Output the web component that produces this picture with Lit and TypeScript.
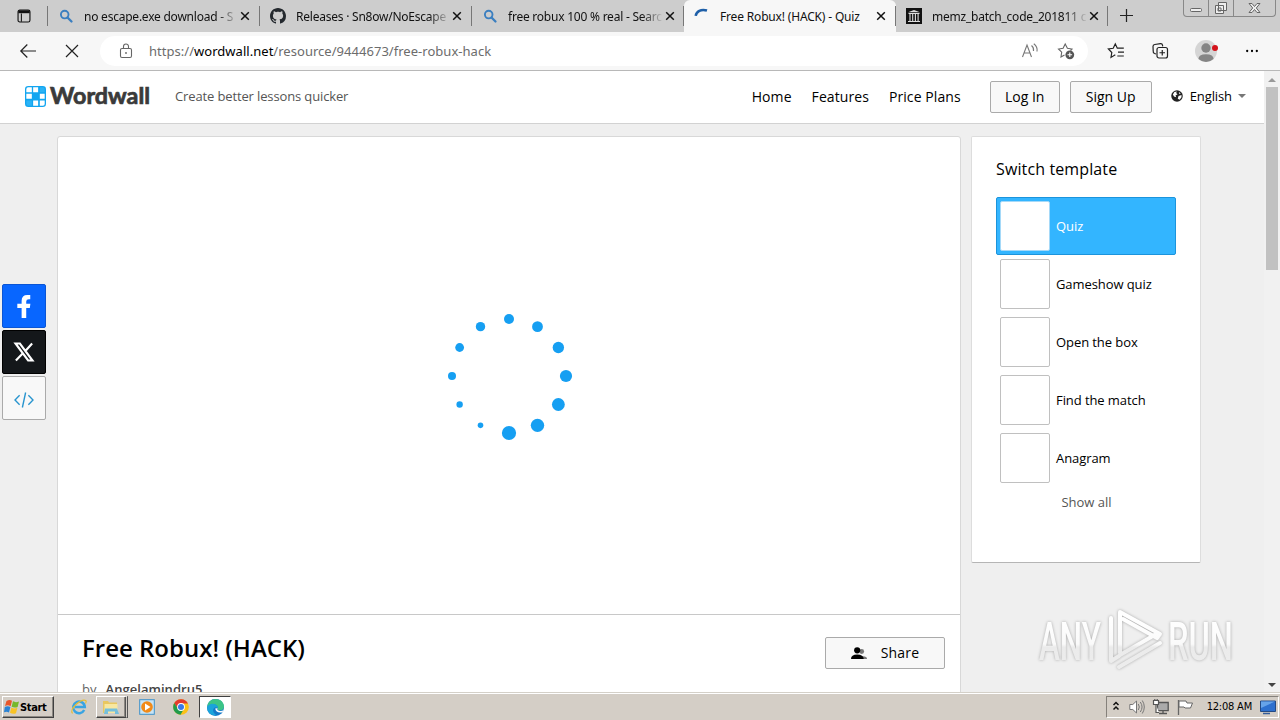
import { LitElement, html, svg, css } from "lit";
import { customElement, property } from "lit/decorators.js";
import { classMap } from "lit/directives/class-map.js";

const TABS = [
  { icon: "search", title: "no escape.exe download - S" },
  { icon: "github", title: "Releases · Sn8ow/NoEscape" },
  { icon: "search", title: "free robux 100 % real - Searc" },
  { icon: "loading", title: "Free Robux! (HACK) - Quiz", active: true },
  { icon: "archive", title: "memz_batch_code_201811 c" },
];

const TEMPLATES = ["Quiz", "Gameshow quiz", "Open the box", "Find the match", "Anagram"];

// radius of each loader dot, clockwise from the top
const DOTS = [5, 5.4, 5.7, 6.1, 6.4, 6.7, 7.1, 2.8, 3.2, 4, 4.4, 4.7];

const ICONS: Record<string, unknown> = {
  tabs: svg`<rect x="1.200" y="1.200" width="13.600" height="13.600" rx="2" fill="none" stroke="#111" stroke-width="1.300"/><path d="M1.500 1.500h13v3.300h-13z" fill="#111"/><path d="M5 5v9.500" stroke="#111" stroke-width="1.200"/>`,
  search: svg`<circle cx="6.700" cy="6.600" r="3.800" fill="none" stroke="#3b7fc0" stroke-width="1.900"/><path d="m9.500 9.500 4 4" stroke="#3b7fc0" stroke-width="2.300" stroke-linecap="round"/>`,
  github: svg`<path fill="#24292e" d="M8 0C3.58 0 0 3.58 0 8c0 3.54 2.29 6.53 5.47 7.59.4.07.55-.17.55-.38 0-.19-.01-.82-.01-1.49-2.01.37-2.53-.49-2.69-.94-.09-.23-.48-.94-.82-1.13-.28-.15-.68-.52-.01-.53.63-.01 1.08.58 1.23.82.72 1.21 1.87.87 2.33.66.07-.52.28-.87.51-1.07-1.78-.2-3.64-.89-3.64-3.95 0-.87.31-1.59.82-2.15-.08-.2-.36-1.02.08-2.12 0 0 .67-.21 2.2.82.64-.18 1.32-.27 2-.27s1.36.09 2 .27c1.53-1.04 2.2-.82 2.2-.82.44 1.1.16 1.92.08 2.12.51.56.82 1.27.82 2.15 0 3.07-1.87 3.75-3.65 3.95.29.25.54.73.54 1.48 0 1.07-.01 1.93-.01 2.2 0 .21.15.46.55.38A8.01 8.01 0 0 0 16 8c0-4.42-3.58-8-8-8z"/>`,
  loading: svg`<path d="M1.700 7.800C2.300 3.500 7 .6 13 2.500" fill="none" stroke="#1e5fa8" stroke-width="2.500"/>`,
  archive: svg`<path d="M0 0h16v16H0z" fill="#111"/><path d="M2 4.300 8 2l6 2.300z" fill="#ddd"/><path d="M2.500 5.500h11M2 13.500h12M4 6v7M6.700 6v7M9.400 6v7M12.100 6v7" stroke="#ddd" stroke-width="1.100"/>`,
  close: svg`<path d="m4.200 4.200 7.600 7.600M11.800 4.200l-7.600 7.600" stroke="#111" stroke-width="1.500"/>`,
  plus: svg`<path d="M8 0v16M0 8h16" stroke="#222" stroke-width="1.500"/>`,
  back: svg`<path d="M16 8H.8M7.300 1.500.8 8l6.500 6.500" fill="none" stroke="#222" stroke-width="1.200"/>`,
  stop: svg`<path d="m2 2 12 12M14 2 2 14" stroke="#222" stroke-width="1.200"/>`,
  lock: svg`<rect x="2.500" y="5.500" width="11" height="9" rx="1.500" fill="none" stroke="#666" stroke-width="1.100"/><path d="M5.500 5.500V3.500a2.500 2.500 0 0 1 5 0v2" fill="none" stroke="#666" stroke-width="1.100"/><circle cx="8" cy="10" r=".9" fill="#666"/>`,
  read: svg`<path d="m.5 14 4.500-12 4.500 12M2.100 10h5.800M9.500 2.500q2.500 2 2 5.500M11.800.8q4 3 3.200 7.700" fill="none" stroke="#777" stroke-width="1.100"/>`,
  addStar: svg`<path d="M6.500 12 3 14l.7-4.800L.5 6l4.600-.8L7.200 1l2.200 4.200 4.600.8-1.500 1.500" fill="none" stroke="#666" stroke-width="1.100"/><circle cx="11.800" cy="11.800" r="4.400" fill="#555"/><path d="M11.800 9.500v4.600M9.500 11.800h4.600" stroke="#fff" stroke-width="1.100"/>`,
  favorites: svg`<path d="M7.300 11.800 3 14.400l.8-4.900L.4 6l4.800-.7L7.300 1l2 4.200h6.500M10 9.200h6M9.300 13h6.500" fill="none" stroke="#222" stroke-width="1.200"/>`,
  collections: svg`<path d="M4 11 2.500 10.500Q1 9.800 1.200 8L1 3.500Q1 1.800 2.700 1.500L8.500.6q1.700-.2 2 1.500l.2 1.200" fill="none" stroke="#222" stroke-width="1.200"/><rect x="5" y="4.500" width="10.500" height="10.500" rx="2" fill="#f7f7f7" stroke="#222" stroke-width="1.200"/><path d="M10.250 7v5.600M7.500 9.750h5.500" stroke="#222" stroke-width="1.200"/>`,
  profile: svg`<circle cx="8" cy="8" r="8" fill="#d5d5d5"/><circle cx="8" cy="5.800" r="3.400" fill="#858585"/><path d="M2.500 13.800q0-3.500 5.500-3.500t5.500 3.500Q8 18.200 2.500 13.800" fill="#858585"/>`,
  more: svg`<circle cx="2.500" cy="8" r="1.300"/><circle cx="8" cy="8" r="1.300"/><circle cx="13.500" cy="8" r="1.300"/>`,
  logo: svg`<rect width="16" height="16" rx="2.500" fill="#12a5f0"/><path d="M1 2.500Q1 1 2.500 1H5.200v3.700H1zM6.200 1H10v3.700H6.200zM1 5.900h4.200v3.900H1zM11.300 5.900H15v3.900h-3.700zM6.200 11H10v4H6.200zM11.300 11H15v2.700Q15 15 13.700 15h-2.400z" fill="#fff"/><path d="M11.300 1h2.400Q15 1 15 2.300v2.400h-3.700zM1 11h4.200v4H2.500Q1 15 1 13.500z" fill="#2bb3f6"/>`,
  globe: svg`<circle cx="8" cy="8" r="7.700" fill="#222"/><path d="m2.500 6 2-3.300L8 2 6.800 4l2 1.500L6 7.300l1 2.200-3-1zM10 8l4-1.300v3L11.500 13 9 11.500zM10.500 2.600l2.500 2-2 .8z" fill="#fff"/>`,
  facebook: svg`<path d="M6 16V9H3V6h3V4q0-4 4-4h2V3h-1Q9.200 3 9.200 4.500V6h2.900l-.4 3H9.200v7z" fill="#fff"/>`,
  x: svg`<path d="M1.200 1.200h3.500l10.100 13.600h-3.500zM14.500 1.200 9.100 7.200M6.900 9.200 1.500 14.800" fill="none" stroke="#fff" stroke-width="1.700"/>`,
  code: svg`<path d="M4.500 4.200.8 8l3.700 3.800M11.500 4.200 15.200 8l-3.700 3.800M9.300 2 6.700 14" fill="none" stroke="#2894ce" stroke-width="1.100"/>`,
  people: svg`<circle cx="10.700" cy="6.500" r="2.400" fill="#777"/><path d="M9 14v-2.500q7-1 7 2.500z" fill="#777"/><circle cx="6.200" cy="5.300" r="3.100"/><path d="M0 14q0-4.500 6.200-4.500t6.500 4.500z"/>`,
  windows: svg`<path d="M2.500 2Q5.500.2 8 1.800L6.600 7.200Q4 5.500 1 7z" fill="#e8562a"/><path d="M9 2.300q2.800 1.600 6 .1L13.600 8q-3 1.200-6-.3z" fill="#76b82a"/><path d="M.8 8q3-1.600 5.600.1L5 13.500q-2.400-1.600-5-.2z" fill="#2b83d4"/><path d="M7.400 8.600q3 1.600 6 .2L12 14.200q-3 1.300-6-.4z" fill="#f8c325"/>`,
  ie: svg`<path d="M13.200 11A5.800 5.800 0 1 1 13.800 8H4" fill="none" stroke="#39a4e2" stroke-width="2.500"/><path d="M1.500 14.500C-2 10 10-.5 14.800 1.500q1 1-.3 3" fill="none" stroke="#e5bd35" stroke-width="1.200"/>`,
  folder: svg`<path d="M0 2h5l1 1.500h8V14H0z" fill="#e9c760"/><path d="M1.500 5h13v9h-13z" fill="#f8e7a0"/><path d="M2 9.500h12L16 15h-4v-2.500H5V15H1z" fill="#75bfdc"/>`,
  media: svg`<rect x=".7" y=".7" width="14.600" height="14.600" fill="#c8e4f5" stroke="#3f91c9"/><circle cx="8" cy="8" r="5.800" fill="#f18a18"/><path d="m6 4.500 5.500 3.500L6 11.500z" fill="#fff"/>`,
  chrome: svg`<circle cx="8" cy="8" r="7.800" fill="#fbc116"/><path d="M1.200 4.100A7.800 7.800 0 0 1 15 4.500H8L4.900 9.800z" fill="#e33b2e"/><path d="M1.200 4.100A7.800 7.800 0 0 0 7.500 15.800L11 9.700H5z" fill="#229b4c"/><circle cx="8" cy="8" r="3.900" fill="#fff"/><circle cx="8" cy="8" r="3" fill="#3979e8"/>`,
  edge: svg`<circle cx="8" cy="8" r="8" fill="#1479c9"/><path d="M.2 7.500C.5 3 4 0 8 0c5 0 8 3.500 8 7 0 3-2.500 4-5 3.500-1.500-.3-1-1-.8-2C10.400 5 4 3.200.2 7.500" fill="#3cc487"/><path d="M.2 7.500C1.500 4 7 3 9.800 6.700q.7 1 .3 2Q7.500 6.500 6 9.500q-1.200 3 3 6C3 15.800-.2 12 .2 7.500" fill="#1aa4db"/><path d="M10 8.700q-1.200 2 2 2.500 2.200.2 4-1.200l-1.400 2.500Q8.500 13.500 7.700 9z" fill="#fff"/>`,
  chevrons: svg`<path d="m5.500 6 2.500-2.500L10.500 6M5.500 10.500 8 8l2.500 2.500" fill="none" stroke="#111" stroke-width="1.500"/>`,
  volume: svg`<path d="M.8 5.500h3L7.500 2v12l-3.700-3.500h-3z" fill="#fff" stroke="#777"/><path d="M9.300 5q2 3 0 6M11.300 3q3.500 5 0 10M13.300 1.500q4 6.500 0 13" fill="none" stroke="#777"/>`,
  network: svg`<path d="M4.500 3.500h10.700v8.200H4.500zM6 14.500h8M10 12v2" fill="#aaa" stroke="#555" stroke-width="1.300"/><path d="M.5 1.500v4h5v-4zM1.800 0v2M4.200 0v2M3 5.500v8h3" fill="#fff" stroke="#555" stroke-width="1.200"/>`,
  flag: svg`<path d="M1.500 1v15" stroke="#666" stroke-width="1.300"/><path d="M2 2h7l1 2h5.500l-2 5H8L7 8H2z" fill="#fff" stroke="#666"/>`,
  desktop: svg`<path d="M.5 2h15v10.500H.5z" fill="#2d70ce" stroke="#244a83"/><path d="M1 2.500h14L1 9z" fill="#66a3e8"/><path d="M3 14.500h7" stroke="#335c9a" stroke-width="1.500"/>`,
};

@customElement("ui-icon")
export class UiIcon extends LitElement {
  static override styles = css`
    :host {
      display: inline-block;
      flex: none;
      width: 16px;
      height: 16px;
    }
    svg {
      display: block;
      width: 100%;
      height: 100%;
      overflow: visible;
    }
  `;

  @property() name = "";

  override render() {
    return html`<svg viewBox="0 0 16 16" aria-hidden="true">${ICONS[this.name]}</svg>`;
  }
}

@customElement("browser-chrome")
export class BrowserChrome extends LitElement {
  static override styles = css`
    :host {
      display: block;
      height: 71px;
      box-sizing: border-box;
      border-bottom: 1px solid #b8b8b8;
      background: #f7f7f7;
      font: 12px "Noto Sans", sans-serif;
      color: #111;
    }
    .tabs {
      display: flex;
      height: 32px;
      background: #cdcdcd;
    }
    .tab-menu {
      display: flex;
      align-items: center;
      width: 48px;
      box-sizing: border-box;
      padding-left: 17px;
    }
    .tab-menu ui-icon {
      width: 14px;
      height: 14px;
    }
    .tab {
      display: flex;
      align-items: center;
      width: 212px;
      box-sizing: border-box;
      padding: 0 7px 0 10px;
    }
    .tab.active {
      background: #f7f7f7;
      border-radius: 6px 6px 0 0;
    }
    .tab-title {
      flex: 1;
      margin-left: 10px;
      white-space: nowrap;
      letter-spacing: -0.23px;
      mask-image: linear-gradient(90deg, #000 87%, transparent 101%);
    }
    .tab.active .tab-title {
      letter-spacing: -0.17px;
      mask-image: none;
    }
    .divider {
      width: 1px;
      height: 20px;
      margin: 6px 0 0 -1px;
      background: #777;
    }
    .new-tab {
      width: 13px;
      height: 13px;
      margin: 9px 0 0 12px;
    }
    .window-buttons {
      display: flex;
      width: 93px;
      height: 17px;
      margin: 0 4px 0 auto;
      box-sizing: border-box;
      border: 1px solid #888;
      border-top: 0;
      border-radius: 0 0 4px 4px;
    }
    .window-buttons svg {
      display: block;
    }
    .toolbar {
      display: flex;
      align-items: center;
      height: 38px;
    }
    .back {
      margin-left: 20px;
    }
    .stop {
      margin: 0 20px 0 28px;
    }
    .address {
      display: flex;
      align-items: center;
      width: 988px;
      height: 30px;
      box-sizing: border-box;
      padding: 0 14px 0 18px;
      border-radius: 15px;
      background: #fff;
    }
    .url {
      margin: 0 auto 0 15px;
      font-size: 13px;
      letter-spacing: 0.03px;
      color: #6c6c6c;
    }
    .url b {
      font-weight: 400;
      color: #000;
    }
    .address .add-star {
      margin-left: 20px;
    }
    .actions {
      display: flex;
      align-items: center;
      gap: 28px;
      margin-left: 20px;
    }
    .profile {
      position: relative;
      display: flex;
      margin-left: -1px;
    }
    .profile ui-icon {
      width: 22px;
      height: 22px;
    }
    .profile::after {
      content: "";
      position: absolute;
      top: 5px;
      right: -1px;
      width: 6px;
      height: 6px;
      border-radius: 50%;
      background: #d3131b;
    }
    .actions .more {
      width: 14px;
      height: 14px;
    }
  `;

  override render() {
    return html`
      <div class="tabs">
        <div class="tab-menu"><ui-icon name="tabs"></ui-icon></div>
        ${TABS.map(
          (tab) => html`
            <div class="divider"></div>
            <div class=${classMap({ tab: true, active: !!tab.active })}>
              <ui-icon name=${tab.icon}></ui-icon>
              <span class="tab-title">${tab.title}</span>
              <ui-icon name="close"></ui-icon>
            </div>
          `
        )}
        <div class="divider"></div>
        <ui-icon class="new-tab" name="plus"></ui-icon>
        <div class="window-buttons">
          <svg width="91" height="16" fill="#eee" stroke="#666">
            <path d="M24.500 0v16M49.500 0v16" stroke="#888" />
            <rect x="6.500" y="8.500" width="11" height="3" rx="1" />
            <path d="M34.500 2.500h8v8h-8zM31.500 5.500h8v8h-8zM34 8h3v3h-3z" />
            <path d="m65 3.500 3 0 2.500 3 2.500-3h3L72.300 8l3.700 4.500h-3l-2.500-3-2.500 3h-3L68.700 8z" />
          </svg>
        </div>
      </div>
      <div class="toolbar">
        <ui-icon class="back" name="back"></ui-icon>
        <ui-icon class="stop" name="stop"></ui-icon>
        <div class="address">
          <ui-icon name="lock"></ui-icon>
          <span class="url">https://<b>wordwall.net</b>/resource/9444673/free-robux-hack</span>
          <ui-icon name="read"></ui-icon>
          <ui-icon class="add-star" name="addStar"></ui-icon>
        </div>
        <div class="actions">
          <ui-icon name="favorites"></ui-icon>
          <ui-icon name="collections"></ui-icon>
          <span class="profile"><ui-icon name="profile"></ui-icon></span>
          <ui-icon class="more" name="more"></ui-icon>
        </div>
      </div>
    `;
  }
}

@customElement("wordwall-page")
export class WordwallPage extends LitElement {
  static override styles = css`
    :host {
      position: relative;
      display: flex;
      height: 621px;
      overflow: hidden;
      background: #efefef;
      font-family: "Open Sans", sans-serif;
      color: #000;
    }
    .page {
      width: 1264px;
      flex: none;
    }
    .header {
      display: flex;
      align-items: center;
      height: 53px;
      box-sizing: border-box;
      padding: 0 18px 2px 25px;
      border-bottom: 1px solid #d2d2d2;
      background: #fff;
      font-size: 14px;
      white-space: nowrap;
    }
    .logo {
      width: 21px;
      height: 21px;
    }
    .brand {
      width: 126px;
      height: 26px;
      margin-left: 3px;
    }
    .brand text {
      font: 700 22px Lato, sans-serif;
      fill: #3a3a3a;
      stroke: #3a3a3a;
      stroke-width: 0.7;
    }
    .tagline {
      margin: 0 auto 0 0;
      font-size: 13px;
      letter-spacing: -0.13px;
      color: #555;
    }
    .nav {
      display: flex;
      gap: 20px;
      margin-right: 29px;
      letter-spacing: 0.08px;
    }
    .button {
      display: flex;
      align-items: center;
      justify-content: center;
      height: 32px;
      box-sizing: border-box;
      padding-bottom: 2px;
      border: 1px solid #aaa;
      border-radius: 2px;
      background: #f8f8f8;
      font-size: 14px;
    }
    .header .button {
      margin-top: 2px;
    }
    .login {
      width: 70px;
      margin-right: 10px;
    }
    .signup {
      width: 82px;
      margin-right: 19px;
    }
    .globe {
      width: 12px;
      height: 12px;
      margin-right: 7px;
    }
    .language {
      font-size: 13px;
      letter-spacing: -0.1px;
    }
    .caret {
      margin-left: 6px;
      border: 4px solid transparent;
      border-top-color: #777;
      border-bottom: 0;
    }
    .content {
      display: flex;
      align-items: flex-start;
      padding-top: 12px;
    }
    .social {
      display: flex;
      flex-direction: column;
      gap: 2px;
      width: 57px;
      box-sizing: border-box;
      padding: 148px 0 0 2px;
    }
    .social-button {
      display: flex;
      align-items: center;
      justify-content: center;
      width: 44px;
      height: 44px;
      box-sizing: border-box;
      border: 1px solid #aaa;
      border-radius: 2px;
      background: #f8f8f8;
    }
    .social-button.facebook {
      border-color: #0a55d5;
      background: #0866ff;
    }
    .social-button.x {
      border-color: #000;
      background: #14171a;
    }
    .social-button.code {
      padding-top: 4px;
    }
    .social-button ui-icon {
      width: 20px;
      height: 20px;
    }
    .social-button.facebook ui-icon {
      width: 23px;
      height: 23px;
    }
    .activity {
      width: 904px;
      height: 600px;
      box-sizing: border-box;
      border: 1px solid #d8d8d8;
      border-radius: 3px;
      background: #fff;
    }
    .stage {
      display: flex;
      align-items: center;
      justify-content: center;
      height: 477px;
      border-bottom: 1px solid #c8c8c8;
    }
    .info {
      display: flex;
      justify-content: space-between;
      padding: 16px 15px 0 24px;
    }
    .title {
      margin: 0;
      font-size: 24px;
      font-weight: 600;
      line-height: 34px;
    }
    .author {
      display: flex;
      gap: 9px;
      margin-top: 14px;
      font-size: 13px;
      line-height: 20px;
      letter-spacing: 0.04px;
      color: #666;
    }
    .author b {
      font-weight: 600;
      color: #444;
    }
    .share {
      gap: 14px;
      width: 120px;
      margin-top: 6px;
      letter-spacing: 0.2px;
    }
    .share ui-icon {
      margin-top: 1px;
    }
    .sidebar {
      width: 230px;
      height: 427px;
      margin-left: 10px;
      box-sizing: border-box;
      padding: 20px 24px 0;
      border: 1px solid #ddd;
      border-bottom-color: #b5b5b5;
      border-radius: 2px;
      background: #fff;
    }
    .sidebar-title {
      margin: 0 0 16px;
      font-size: 16px;
      font-weight: 400;
      line-height: 24px;
      letter-spacing: 0.12px;
    }
    .template {
      display: flex;
      align-items: center;
      gap: 6px;
      height: 58px;
      box-sizing: border-box;
      padding-left: 3px;
      border: 1px solid transparent;
      font-size: 13px;
      letter-spacing: -0.08px;
    }
    .template.selected {
      border-color: #1c94dc;
      border-radius: 2px;
      background: #33b5ff;
      color: #fff;
    }
    .thumb {
      width: 50px;
      height: 50px;
      box-sizing: border-box;
      border: 1px solid #c0c0c0;
      border-radius: 2px;
      background: #fff;
    }
    .selected .thumb {
      border-color: #a5d9f8;
    }
    .show-all {
      margin-top: 6px;
      padding-left: 1px;
      font-size: 13px;
      line-height: 18px;
      text-align: center;
      color: #555;
    }
    .scrollbar {
      display: flex;
      flex-direction: column;
      align-items: center;
      width: 16px;
      box-sizing: border-box;
      padding: 7px 0 5px;
      background: #f1f1f1;
    }
    .arrow {
      border: 4px solid transparent;
    }
    .arrow.up {
      border-bottom-color: #999;
      border-top: 0;
    }
    .arrow.down {
      margin-top: auto;
      border-top-color: #444;
      border-bottom: 0;
    }
    .thumb-bar {
      width: 12px;
      height: 183px;
      margin-top: 5px;
      background: #c1c1c1;
    }
    /* sits over the page in the bottom right corner */
    .watermark {
      position: absolute;
      right: 40px;
      bottom: 13px;
      filter: drop-shadow(0 0 1.5px #a8a8a8);
    }
    .watermark text {
      font: 500 53px Roboto, sans-serif;
      fill: url(#fade);
    }
  `;

  private _renderLoader() {
    return html`
      <svg width="130" height="130" viewBox="-65 -65 130 130" fill="#169ff2">
        ${DOTS.map((r, i) => {
          const angle = (i * Math.PI) / 6;
          return svg`<circle cx=${57 * Math.sin(angle)} cy=${-57 * Math.cos(angle)} r=${r} />`;
        })}
      </svg>
    `;
  }

  override render() {
    return html`
      <div class="page">
        <div class="header">
          <ui-icon class="logo" name="logo"></ui-icon>
          <svg class="brand"><text x="1" y="21" textLength="100" lengthAdjust="spacingAndGlyphs">Wordwall</text></svg>
          <span class="tagline">Create better lessons quicker</span>
          <div class="nav"><span>Home</span><span>Features</span><span>Price Plans</span></div>
          <div class="button login">Log In</div>
          <div class="button signup">Sign Up</div>
          <ui-icon class="globe" name="globe"></ui-icon>
          <span class="language">English</span>
          <span class="caret"></span>
        </div>
        <div class="content">
          <div class="social">
            <div class="social-button facebook"><ui-icon name="facebook"></ui-icon></div>
            <div class="social-button x"><ui-icon name="x"></ui-icon></div>
            <div class="social-button code"><ui-icon name="code"></ui-icon></div>
          </div>
          <div class="activity">
            <div class="stage">${this._renderLoader()}</div>
            <div class="info">
              <div>
                <h1 class="title">Free Robux! (HACK)</h1>
                <div class="author">by <b>Angelamindru5</b></div>
              </div>
              <div class="button share"><ui-icon name="people"></ui-icon>Share</div>
            </div>
          </div>
          <div class="sidebar">
            <h2 class="sidebar-title">Switch template</h2>
            ${TEMPLATES.map(
              (name, i) => html`
                <div class=${classMap({ template: true, selected: i === 0 })}>
                  <span class="thumb"></span>${name}
                </div>
              `
            )}
            <div class="show-all">Show all</div>
          </div>
        </div>
      </div>
      <div class="scrollbar">
        <span class="arrow up"></span>
        <span class="thumb-bar"></span>
        <span class="arrow down"></span>
      </div>
      <svg class="watermark" width="204" height="72">
        <defs>
          <linearGradient id="fade" gradientUnits="userSpaceOnUse" x1="0" y1="10" x2="0" y2="64">
            <stop offset="0" stop-color="#fff" />
            <stop offset="0.5" stop-color="#fafafa" />
            <stop offset="0.56" stop-color="#ebebeb" />
            <stop offset="1" stop-color="#ededed" />
          </linearGradient>
        </defs>
        <text x="3" y="53" textLength="62" lengthAdjust="spacingAndGlyphs">ANY</text>
        <text x="132" y="53" textLength="65" lengthAdjust="spacingAndGlyphs">RUN</text>
        <g fill="none" stroke="url(#fade)" stroke-width="4" stroke-linejoin="round" stroke-linecap="round">
          <path d="M75 11v43l8-5" />
          <path d="M84 46V5l40 22-3 4-34-19M84 48l38-22" />
          <path d="M83 60l41-24" />
        </g>
      </svg>
    `;
  }
}

@customElement("task-bar")
export class TaskBar extends LitElement {
  static override styles = css`
    :host {
      display: flex;
      align-items: center;
      height: 28px;
      box-sizing: border-box;
      padding: 1px 1px 0 2px;
      border-top: 1px solid #d4d0c8;
      box-shadow: inset 0 1px #fff;
      background: #d4cec6;
      font: 11px "DejaVu Sans Condensed", "DejaVu Sans", sans-serif;
      color: #000;
    }
    .start,
    .task {
      display: flex;
      align-items: center;
      height: 22px;
      box-sizing: border-box;
      border: 1px solid;
      border-color: #fff #404040 #404040 #fff;
      box-shadow: inset -1px -1px #8c8882;
    }
    .start {
      width: 52px;
      padding-left: 1px;
      font-weight: 700;
      letter-spacing: -0.35px;
    }
    .quick {
      display: flex;
      align-items: center;
      margin-left: 17px;
    }
    .task {
      justify-content: center;
      width: 32px;
    }
    .task.folder {
      margin: 0 11px 0 9px;
      border-right: 3px double #555;
    }
    .task.edge {
      margin-left: 10px;
      border-color: #404040 #fff #fff #404040;
      box-shadow: none;
      background: #fff;
    }
    .chrome {
      margin-left: 18px;
    }
    .task.edge ui-icon {
      width: 17px;
      height: 17px;
    }
    .tray {
      display: flex;
      align-items: center;
      gap: 8px;
      width: 173px;
      height: 22px;
      margin-left: auto;
      box-sizing: border-box;
      padding: 0 2px 0 1px;
      border: 1px solid;
      border-color: #85817b #fff #fff #85817b;
    }
    .time {
      margin: 0 0 1px auto;
      white-space: nowrap;
      letter-spacing: -0.2px;
    }
    .chevrons {
      margin-right: -3px;
    }
  `;

  override render() {
    return html`
      <div class="start"><ui-icon name="windows"></ui-icon>Start</div>
      <div class="quick">
        <ui-icon name="ie"></ui-icon>
        <div class="task folder"><ui-icon name="folder"></ui-icon></div>
        <ui-icon name="media"></ui-icon>
        <ui-icon class="chrome" name="chrome"></ui-icon>
        <div class="task edge"><ui-icon name="edge"></ui-icon></div>
      </div>
      <div class="tray">
        <ui-icon class="chevrons" name="chevrons"></ui-icon>
        <ui-icon name="volume"></ui-icon>
        <ui-icon name="network"></ui-icon>
        <ui-icon name="flag"></ui-icon>
        <span class="time">12:08 AM</span>
        <ui-icon name="desktop"></ui-icon>
      </div>
    `;
  }
}

@customElement("app-root")
export class AppRoot extends LitElement {
  static override styles = css`
    :host {
      display: block;
      width: 1280px;
      height: 720px;
      overflow: hidden;
    }
  `;

  override render() {
    return html`
      <browser-chrome></browser-chrome>
      <wordwall-page></wordwall-page>
      <task-bar></task-bar>
    `;
  }
}
